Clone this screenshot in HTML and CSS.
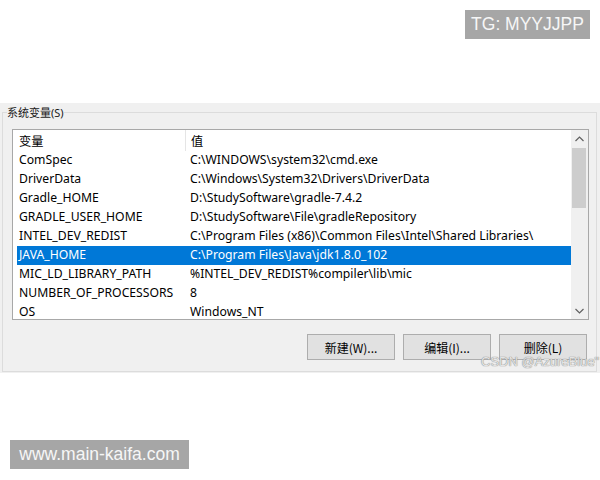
FILE: index.html
```html
<!DOCTYPE html>
<html lang="zh-CN">
<head>
    <meta charset="UTF-8">
    <meta name="viewport" content="width=device-width, initial-scale=1.0">
    <title>系统变量</title>
    <link rel="stylesheet" href="styles.css">
</head>
<body>
    <div class="tag tag-top">TG: MYYJJPP</div>

    <div class="panel">
        <fieldset class="group">
            <legend>系统变量(S)</legend>
            <div class="listbox">
                <div class="list">
                    <div class="list-head">
                        <span class="col-name">变量</span>
                        <span class="col-value">值</span>
                    </div>
                    <div class="row"><span class="col-name">ComSpec</span><span class="col-value">C:\WINDOWS\system32\cmd.exe</span></div>
                    <div class="row"><span class="col-name">DriverData</span><span class="col-value">C:\Windows\System32\Drivers\DriverData</span></div>
                    <div class="row"><span class="col-name">Gradle_HOME</span><span class="col-value">D:\StudySoftware\gradle-7.4.2</span></div>
                    <div class="row"><span class="col-name">GRADLE_USER_HOME</span><span class="col-value">D:\StudySoftware\File\gradleRepository</span></div>
                    <div class="row"><span class="col-name">INTEL_DEV_REDIST</span><span class="col-value">C:\Program Files (x86)\Common Files\Intel\Shared Libraries\</span></div>
                    <div class="row selected"><span class="col-name">JAVA_HOME</span><span class="col-value">C:\Program Files\Java\jdk1.8.0_102</span></div>
                    <div class="row"><span class="col-name">MIC_LD_LIBRARY_PATH</span><span class="col-value">%INTEL_DEV_REDIST%compiler\lib\mic</span></div>
                    <div class="row"><span class="col-name">NUMBER_OF_PROCESSORS</span><span class="col-value">8</span></div>
                    <div class="row"><span class="col-name">OS</span><span class="col-value">Windows_NT</span></div>
                </div>
                <div class="scrollbar">
                    <div class="arrow">
                        <svg width="9" height="6" viewBox="0 0 9 6"><polyline points="0.5,5 4.5,1 8.5,5" fill="none" stroke="#606060" stroke-width="1.2"/></svg>
                    </div>
                    <div class="track"><div class="thumb"></div></div>
                    <div class="arrow">
                        <svg width="9" height="6" viewBox="0 0 9 6"><polyline points="0.5,1 4.5,5 8.5,1" fill="none" stroke="#606060" stroke-width="1.2"/></svg>
                    </div>
                </div>
            </div>
            <div class="actions">
                <button>新建(W)...</button>
                <button>编辑(I)...</button>
                <button>删除(L)</button>
            </div>
            <div class="mark">CSDN @AzureBlue"</div>
        </fieldset>
    </div>

    <div class="tag tag-bottom">www.main-kaifa.com</div>
</body>
</html>
```

FILE: styles.css
```css
body {
    margin: 0;
    background: #ffffff;
    font-family: "Noto Sans", "Noto Sans CJK SC", sans-serif;
    font-size: 12px;
    color: #000000;
    width: 600px;
    height: 480px;
    overflow: hidden;
}
.tag {
    background-color: #a6a6a6;
    color: #f6f6f6;
    font-family: "Liberation Sans", Arial, sans-serif;
    height: 29px;
    line-height: 29px;
    text-align: center;
}
.tag-top {
    width: 125px;
    font-size: 17.5px;
    margin: 10px 10px 0 auto;
}
.tag-bottom {
    width: 179px;
    font-size: 17.5px;
    margin: 67px 0 0 10px;
}
.panel {
    background: #f0f0f0;
    margin-top: 64px;
    height: 270px;
    padding-top: 2px;
    box-sizing: border-box;
}
.group {
    position: relative;
    margin: 0 3px 0 2px;
    padding: 9px 7px 11px 9px;
    border: 1px solid #dcdcdc;
    min-width: 0;
}
.group legend {
    padding: 0;
    margin-left: -5px;
    font-size: 11px;
    line-height: 15px;
    color: #1a1a1a;
}
.listbox {
    display: flex;
    height: 189px;
    border: 1px solid #a8a8a8;
    background: #ffffff;
    overflow: hidden;
}
.list {
    flex: 1;
    padding-left: 4px;
    overflow: hidden;
    font-size: 12.2px;
}
.list-head, .row {
    display: flex;
    white-space: nowrap;
}
.list-head {
    height: 21px;
    line-height: 23px;
}
.row {
    height: 19px;
    line-height: 18px;
}
.col-name {
    width: 171px;
    padding-left: 2px;
    flex-shrink: 0;
}
.list-head .col-name {
    border-right: 1px solid #e5e5e5;
    width: 166px;
}
.list-head .col-value {
    padding-left: 5px;
}
.row.selected {
    background: #0078d7;
    color: #ffffff;
}
.scrollbar {
    width: 17px;
    display: flex;
    flex-direction: column;
    background: #f0f0f0;
}
.arrow {
    height: 17px;
    display: flex;
    align-items: center;
    justify-content: center;
}
.track {
    flex: 1;
    padding: 1px 2px 0 1px;
}
.thumb {
    height: 60px;
    background: #cdcdcd;
}
.actions {
    display: flex;
    justify-content: flex-end;
    gap: 8px;
    margin: 14px 2px 0 0;
}
.actions button {
    width: 88px;
    height: 26px;
    background: #e1e1e1;
    border: 1px solid #adadad;
    font-family: "Noto Sans CJK SC", sans-serif;
    font-size: 12px;
    color: #000000;
    padding: 0;
}
.mark {
    position: absolute;
    left: 478px;
    top: 234px;
    white-space: nowrap;
    font-family: "Liberation Sans", Arial, sans-serif;
    font-size: 13px;
    color: #e4e4e4;
    text-shadow: 0 0 1px #8a8a8a, 0 0 1px #8a8a8a;
}
```
